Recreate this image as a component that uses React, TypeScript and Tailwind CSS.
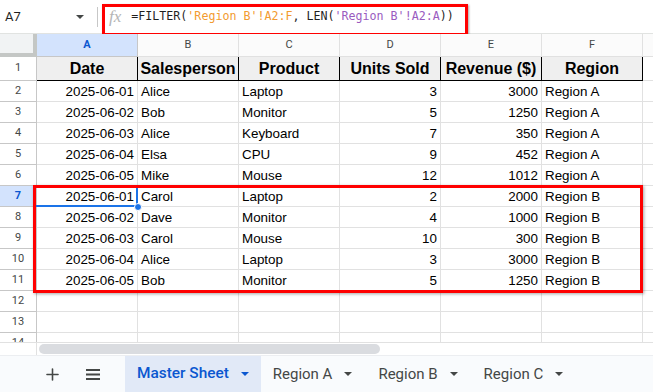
import { Plus } from "lucide-react";

const rows = [
  ["2025-06-01", "Alice", "Laptop", "3", "3000", "Region A"],
  ["2025-06-02", "Bob", "Monitor", "5", "1250", "Region A"],
  ["2025-06-03", "Alice", "Keyboard", "7", "350", "Region A"],
  ["2025-06-04", "Elsa", "CPU", "9", "452", "Region A"],
  ["2025-06-05", "Mike", "Mouse", "12", "1012", "Region A"],
  ["2025-06-01", "Carol", "Laptop", "2", "2000", "Region B"],
  ["2025-06-02", "Dave", "Monitor", "4", "1000", "Region B"],
  ["2025-06-03", "Carol", "Mouse", "10", "300", "Region B"],
  ["2025-06-04", "Alice", "Laptop", "3", "3000", "Region B"],
  ["2025-06-05", "Bob", "Monitor", "5", "1250", "Region B"],
  ["", "", "", "", "", ""],
  ["", "", "", "", "", ""],
  ["", "", "", "", "", ""],
];

const headers = ["Date", "Salesperson", "Product", "Units Sold", "Revenue ($)", "Region"];
const letters = ["A", "B", "C", "D", "E", "F"];
const rightAligned = [true, false, false, true, true, false];

function Caret({ color = "#444746" }: { color?: string }) {
  return (
    <svg width="8" height="4" viewBox="0 0 8 4" className="shrink-0">
      <path d="M0 0 L8 0 L4 4 Z" fill={color} />
    </svg>
  );
}

function Tab({ label, active }: { label: string; active?: boolean }) {
  return (
    <div
      className={
        active
          ? "h-full flex items-center gap-3 pl-3 pr-3 bg-[#e1e9f7] text-[#0b57d0] font-medium"
          : "h-full flex items-center gap-3 pl-3 pr-[14px] text-[#444746]"
      }
    >
      <span className={active ? "text-[15.4px] leading-none" : "text-[15px] leading-none"}>{label}</span>
      <Caret color={active ? "#0b57d0" : "#444746"} />
    </div>
  );
}

export default function App() {
  return (
    <div className="w-[653px] h-[392px] bg-white overflow-hidden flex flex-col font-['Roboto',sans-serif]">
      {/* Formula bar */}
      <div className="relative h-[34px] shrink-0 flex items-center border-b border-[#e1e3e1]">
        <div className="w-[97px] h-full flex items-center justify-between pl-[5px] pr-[13px]">
          <span className="text-[13px] text-[#1f1f1f]">A7</span>
          <Caret />
        </div>
        <div className="w-px h-[20px] bg-[#c7c7c7]" />
        <span className="ml-[11px] text-[17px] italic text-[#b5b5b5] font-['Liberation_Serif',serif] leading-none">
          fx
        </span>
        <span className="ml-[10px] whitespace-pre text-[11.65px] text-[#1f1f1f] font-['DejaVu_Sans_Mono',monospace]">
          =FILTER(<span className="text-[#f29b30]">'Region B'!A2:F</span>, LEN(
          <span className="text-[#9a5bbf]">'Region B'!A2:A</span>))
        </span>
        <div className="absolute left-[102px] top-[4px] w-[366px] h-[32px] border-[3px] border-[#ff0000] shadow-[1px_1px_2px_rgba(0,0,0,0.35)]" />
      </div>

      {/* Grid */}
      <div className="relative h-[308px] shrink-0 overflow-hidden font-['Liberation_Sans',Arial,sans-serif]">
        {/* Column headers */}
        <div className="flex h-[23px]">
          <div className="w-[37px] shrink-0 bg-[#f1f3f4] border-r-[4px] border-b-[4px] border-[#c4c7c5]" />
          {letters.map((l) => (
            <div
              key={l}
              className={
                l === "A"
                  ? "w-[101px] shrink-0 flex items-center justify-center border-r border-b border-[#c7c7c7] bg-[#d3e3fd] text-[11px] font-bold text-[#0b57d0] font-['Roboto',sans-serif]"
                  : "w-[101px] shrink-0 flex items-center justify-center border-r border-b border-[#e1e1e1] bg-[#fbfbfb] text-[11px] text-[#444746] font-['Roboto',sans-serif]"
              }
            >
              {l}
            </div>
          ))}
          <div className="flex-1 border-b border-[#e1e1e1] bg-[#fbfbfb]" />
        </div>

        {/* Row 1 */}
        <div className="flex h-[24px]">
          <div className="w-[37px] shrink-0 flex items-center justify-center border-r border-b border-[#c7c7c7] text-[11px] text-[#444746] font-['Roboto',sans-serif]">
            1
          </div>
          {headers.map((h) => (
            <div
              key={h}
              className="w-[101px] shrink-0 flex items-center justify-center bg-[#efefef] border-r border-b border-black text-[16px] font-bold text-black"
            >
              {h}
            </div>
          ))}
          <div className="flex-1 border-b border-[#e1e1e1]" />
        </div>

        {/* Data rows */}
        {rows.map((r, i) => {
          const n = i + 2;
          const sel = n === 7;
          return (
            <div key={n} className="flex h-[21px]">
              <div
                className={
                  sel
                    ? "w-[37px] shrink-0 flex items-center justify-center border-r border-b border-[#c7c7c7] bg-[#d3e3fd] text-[11px] font-bold text-[#0b57d0] font-['Roboto',sans-serif]"
                    : "w-[37px] shrink-0 flex items-center justify-center border-r border-b border-[#c7c7c7] text-[11px] text-[#444746] font-['Roboto',sans-serif]"
                }
              >
                {n}
              </div>
              {r.map((v, j) => (
                <div
                  key={j}
                  className={
                    rightAligned[j]
                      ? "relative w-[101px] shrink-0 flex items-center justify-end pt-[3px] pr-[3px] border-r border-b border-[#e1e1e1] text-[13.4px] text-black"
                      : "relative w-[101px] shrink-0 flex items-center pt-[3px] pl-[3px] border-r border-b border-[#e1e1e1] text-[13.4px] text-black"
                  }
                >
                  {v}
                  {sel && j === 0 && (
                    <>
                      <div className="absolute z-10 left-[-1px] top-[-1px] right-[-1px] bottom-[-1px] border-r-2 border-b-2 border-[#1a73e8]" />
                      <div className="absolute z-10 right-[-5px] bottom-[-5px] w-[8px] h-[8px] rounded-full bg-[#1a73e8] border border-white" />
                    </>
                  )}
                </div>
              ))}
              <div className="flex-1 border-b border-[#e1e1e1]" />
            </div>
          );
        })}

        {/* Highlight box around Region B rows */}
        <div className="absolute z-20 left-[33px] top-[151px] w-[610px] h-[108px] border-[3px] border-[#ff0000] shadow-[1px_1px_3px_rgba(0,0,0,0.35)]" />
      </div>

      {/* Horizontal scroll bar */}
      <div className="h-[13px] shrink-0 flex border-t border-[#e1e1e1]">
        <div className="w-[37px] shrink-0 border-r border-[#e1e1e1]" />
        <div className="flex-1 flex items-center pl-[2px]">
          <div className="w-[341px] h-[10px] rounded-full bg-[#dadce0]" />
        </div>
      </div>

      {/* Sheet tabs */}
      <div className="h-[37px] shrink-0 flex items-center bg-[#f9fbfd] border-t border-[#eceef1]">
        <div className="w-[125px] h-full flex items-center pl-[43px] gap-[24px] text-[#444746]">
          <Plus size={19} strokeWidth={2} />
          <svg width="14" height="11" viewBox="0 0 14 11">
            <rect x="0" y="0" width="14" height="2" fill="#444746" />
            <rect x="0" y="4.5" width="14" height="2" fill="#444746" />
            <rect x="0" y="9" width="14" height="2" fill="#444746" />
          </svg>
        </div>
        <Tab label="Master Sheet" active />
        <Tab label="Region A" />
        <Tab label="Region B" />
        <Tab label="Region C" />
      </div>
    </div>
  );
}
